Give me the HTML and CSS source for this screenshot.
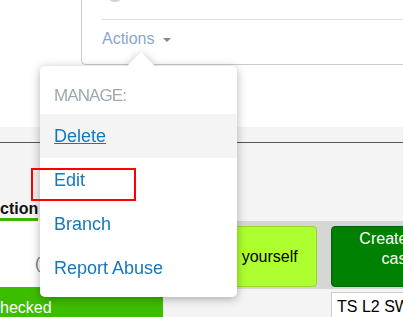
FILE: index.html
```html
<!DOCTYPE html>
<html>
  <head>
    <title>Test case actions</title>
    <link rel="stylesheet" href="styles.css">
  </head>
  <body>
    <div class="header">
      <div class="card">
        <div class="dot"></div>
        <div class="rule"></div>
        <div class="actions">Actions <span class="caret"></span></div>
      </div>
    </div>

    <div class="main">
      <div class="tabs">
        <div class="tab">ction</div>
      </div>
      <div class="content">
        <div class="left">
          <div class="panel"><span class="paren">(</span></div>
          <div class="status">hecked</div>
        </div>
        <div class="right">
          <div class="btnbar">
            <div class="btn btn-assign">Assign yourself</div>
            <div class="btn btn-create">Create test case</div>
          </div>
          <div class="fieldrow">
            <input class="field" type="text" value="TS L2 SW">
          </div>
        </div>
      </div>
    </div>

    <div class="popover">
      <div class="pop-head">MANAGE:</div>
      <a class="pop-item is-active" href="#">Delete</a>
      <a class="pop-item" href="#">Edit</a>
      <a class="pop-item" href="#">Branch</a>
      <a class="pop-item" href="#">Report Abuse</a>
    </div>

    <div class="highlight"></div>
  </body>
</html>
```

FILE: styles.css
```css
/* Page */
html, body { margin: 0; height: 100%; overflow: hidden; }
body { font-family: "Liberation Sans", Arial, sans-serif; font-size: 16px; color: #111; background: #f4f4f4; }

/* Top card with the Actions toggle */
.header { height: 127px; background: #fff; overflow: hidden; }
.card { display: flow-root; height: 64px; margin-left: 81px; padding-left: 20px; border-left: 1px solid #ccc; border-bottom: 1px solid #ccc; border-bottom-left-radius: 5px; }
.dot { width: 18px; height: 18px; box-sizing: border-box; margin: -16px 0 0 4px; border: 2px solid #d0d0d0; border-radius: 50%; }
.rule { margin-top: 17px; border-top: 1px solid #ddd; }
.actions { margin-top: 9px; line-height: 20px; color: #8aa5d3; }
.caret { display: inline-block; vertical-align: middle; margin-left: 4px; border-top: 4px solid #888; border-left: 4px solid transparent; border-right: 4px solid transparent; }

/* Lower part of the page */
.main { padding-top: 15px; background: #f4f4f4; overflow: hidden; }
.tabs { display: flex; align-items: flex-end; height: 78px; border-top: 1px solid #555; }
.tab { font-weight: bold; line-height: 18px; border-bottom: 3px solid #3cb500; }

.content { display: grid; grid-template-columns: 163px 1fr; }
.panel { height: 33px; padding: 33px 0 0 35px; background: #fff; line-height: 20px; }
.paren { color: #777; }
.status { padding-top: 6px; line-height: 30px; background: #3dbd00; color: #fff; }

.btnbar { display: flex; gap: 14px; padding: 5px 7px 2px; background: #d6d6d6; }
.btn { flex: none; display: flex; justify-content: center; box-sizing: border-box; height: 61px; border: 1px solid; border-radius: 4px; text-align: center; line-height: 20px; }
.btn-assign { width: 147px; align-items: center; background: #adff2f; border-color: #9ad62a; color: #000; }
.btn-create { width: 135px; padding: 2px 20px 0; align-items: flex-start; background: #008000; border-color: #006400; color: #fff; }

.fieldrow { padding: 3px 0 0 168px; }
.field { box-sizing: border-box; width: 120px; height: 30px; padding: 0 5px; border: 1px solid #ccc; font: 16px "Liberation Sans", Arial, sans-serif; color: #000; background: #fff; }

/* Actions menu */
.popover { position: absolute; left: 40px; top: 66px; width: 197px; padding-bottom: 7px; background: #fff; border-radius: 5px; filter: drop-shadow(0 2px 5px rgba(0, 0, 0, .3)); }
.popover::before { content: ''; position: absolute; top: -14px; left: 87px; border: 14px solid transparent; border-top: 0; border-bottom-color: #fff; }
.pop-head { padding: 20px 14px 8px; line-height: 20px; font-size: 17px; letter-spacing: -0.9px; color: #9ea8ad; }
.pop-item { display: block; padding-left: 14px; line-height: 44px; font-size: 18px; color: #1578bd; text-decoration: none; }
.pop-item.is-active { background: #f4f4f4; text-decoration: underline; }

/* Annotation */
.highlight { position: absolute; left: 31px; top: 168px; width: 105px; height: 33px; box-sizing: border-box; border: 2px solid #f00; }
```
